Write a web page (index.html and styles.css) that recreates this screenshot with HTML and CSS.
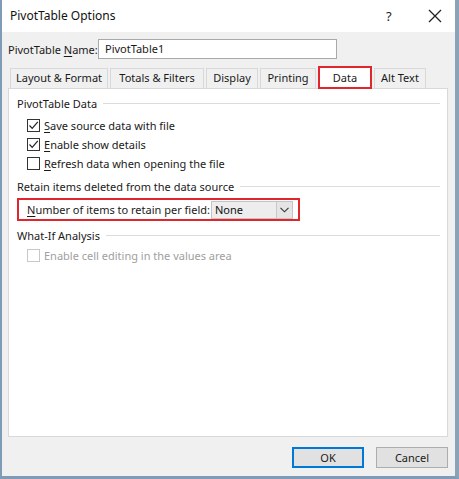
FILE: index.html
```html
<!DOCTYPE html>
<html>
<head>
<meta charset="utf-8">
<link rel="stylesheet" href="styles.css">
</head>
<body>
<div class="window">
  <div class="titlebar">
    <span class="title">PivotTable Options</span>
    <span class="help">?</span>
    <span class="close">
      <svg width="14" height="14" viewBox="0 0 14 14"><path d="M1 1 L13 13 M13 1 L1 13" stroke="#222" stroke-width="1.3" fill="none"/></svg>
    </span>
  </div>
  <div class="body">
    <div class="name-row">
      <span class="label">PivotTable <u>N</u>ame:</span>
      <div class="input">PivotTable1</div>
    </div>
    <div class="tabs">
      <div class="tab t1">Layout &amp; Format</div>
      <div class="tab t2">Totals &amp; Filters</div>
      <div class="tab t3">Display</div>
      <div class="tab t4">Printing</div>
      <div class="tab active">Data</div>
      <div class="tab t6">Alt Text</div>
    </div>
    <div class="panel">
      <div class="group-title"><span>PivotTable Data</span><i class="sep"></i></div>
      <div class="check-row first">
        <span class="box checked"><svg width="11" height="11" viewBox="0 0 11 11"><path d="M1.5 5.5 L4.2 8.3 L9.8 1.8" stroke="#222" stroke-width="1.2" fill="none"/></svg></span>
        <span><u>S</u>ave source data with file</span>
      </div>
      <div class="check-row">
        <span class="box checked"><svg width="11" height="11" viewBox="0 0 11 11"><path d="M1.5 5.5 L4.2 8.3 L9.8 1.8" stroke="#222" stroke-width="1.2" fill="none"/></svg></span>
        <span><u>E</u>nable show details</span>
      </div>
      <div class="check-row">
        <span class="box"></span>
        <span><u>R</u>efresh data when opening the file</span>
      </div>
      <div class="group-title g2"><span>Retain items deleted from the data source</span><i class="sep"></i></div>
      <div class="retain">
        <span><u>N</u>umber of items to retain per field:</span>
        <div class="combo">
          <span class="combo-text">None</span>
          <span class="combo-btn"><svg width="9" height="6" viewBox="0 0 9 6"><path d="M0.5 0.8 L4.5 4.8 L8.5 0.8" stroke="#333" stroke-width="1.1" fill="none"/></svg></span>
        </div>
      </div>
      <div class="group-title g3"><span>What-If Analysis</span><i class="sep"></i></div>
      <div class="check-row disabled">
        <span class="box"></span>
        <span>Enable cell editing in the values area</span>
      </div>
    </div>
    <div class="buttons">
      <div class="btn default">OK</div>
      <div class="btn">Cancel</div>
    </div>
  </div>
</div>
</body>
</html>
```
FILE: styles.css
```css
* { box-sizing: border-box; }
html, body { margin: 0; padding: 0; }
body {
  width: 459px;
  height: 479px;
  overflow: hidden;
  background: #fff;
  font-family: "Noto Sans", "DejaVu Sans", sans-serif;
  font-size: 11px;
  color: #1a1a1a;
}
u { text-decoration: underline; text-underline-offset: 2px; }
.window {
  width: 459px;
  height: 479px;
  border-left: 2px solid #7f9bb5;
  border-right: 4px solid #8aa3b9;
  border-bottom: 3px solid #7f9bb5;
  display: flex;
  flex-direction: column;
  background: #f0f0f0;
}
.titlebar {
  height: 32px;
  background: #fff;
  display: flex;
  align-items: center;
  padding-left: 8px;
  flex: none;
}
.title { font-size: 12px; flex: 1; color: #111; padding-bottom: 1px; }
.help { font-size: 13px; width: 14px; margin-right: 28px; color: #222; }
.close { width: 14px; height: 14px; margin-right: 13px; display: flex; }
.body {
  flex: 1;
  display: flex;
  flex-direction: column;
  padding: 7px 7px 0 6px;
}
.name-row { display: flex; align-items: center; height: 20px; }
.name-row .label { width: 90px; }
.input {
  width: 239px;
  height: 20px;
  background: #fff;
  border: 1px solid #a9a9a9;
  padding-left: 6px;
  line-height: 18px;
}
.tabs {
  display: flex;
  margin-top: 9px;
  padding-left: 2px;
  height: 20px;
  align-items: flex-end;
  gap: 2px;
  position: relative;
  z-index: 1;
}
.tab {
  height: 20px;
  border: 1px solid #d9d9d9;
  border-bottom: none;
  background: #f0f0f0;
  text-align: center;
  line-height: 18px;
}
.t1 { width: 98px; }
.t2 { width: 94px; }
.t3 { width: 52px; }
.t4 { width: 56px; }
.t6 { width: 52px; }
.tab.active {
  width: 54px;
  height: 23px;
  margin-bottom: -1px;
  background: #fff;
  border: 2px solid #e0262c;
  line-height: 19px;
}
.panel {
  width: 440px;
  height: 349px;
  background: #fff;
  border: 1px solid #d9d9d9;
  padding: 6px 7px 0 8px;
  display: flex;
  flex-direction: column;
}
.group-title {
  display: flex;
  align-items: center;
  height: 17px;
  color: #1a1a1a;
}
.group-title .sep {
  flex: 1;
  height: 1px;
  background: #dcdcdc;
  margin-left: 6px;
}
.g2 { margin-top: 5px; }
.g3 { margin-top: 6px; }
.check-row {
  display: flex;
  align-items: center;
  height: 19px;
  padding-left: 10px;
}
.check-row.first { margin-top: 4px; }
.box {
  width: 13px;
  height: 13px;
  border: 1px solid #333;
  background: #fff;
  margin-right: 4px;
  display: flex;
  align-items: center;
  justify-content: center;
}
.disabled { color: #a0a0a0; margin-top: 2px; }
.disabled .box { border-color: #c8c8c8; }
.retain {
  margin-top: 3px;
  width: 283px;
  height: 23px;
  border: 2px solid #e0262c;
  display: flex;
  align-items: center;
  padding-left: 8px;
}
.combo {
  margin-left: 1px;
  width: 82px;
  height: 18px;
  border: 1px solid #c4c4c4;
  background: #ededed;
  display: flex;
  align-items: stretch;
}
.combo-text { flex: 1; padding-left: 3px; line-height: 16px; color: #111; }
.combo-btn {
  width: 16px;
  border-left: 1px solid #c9c9c9;
  background: #e5e5e5;
  display: flex;
  align-items: center;
  justify-content: center;
}
.buttons {
  display: flex;
  justify-content: flex-end;
  gap: 12px;
  margin-top: 10px;
  padding-right: 0;
  width: 440px;
}
.btn {
  width: 72px;
  height: 21px;
  border: 1px solid #adadad;
  background: #e1e1e1;
  text-align: center;
  line-height: 19px;
}
.btn.default { border: 2px solid #0078d7; line-height: 17px; }
```
